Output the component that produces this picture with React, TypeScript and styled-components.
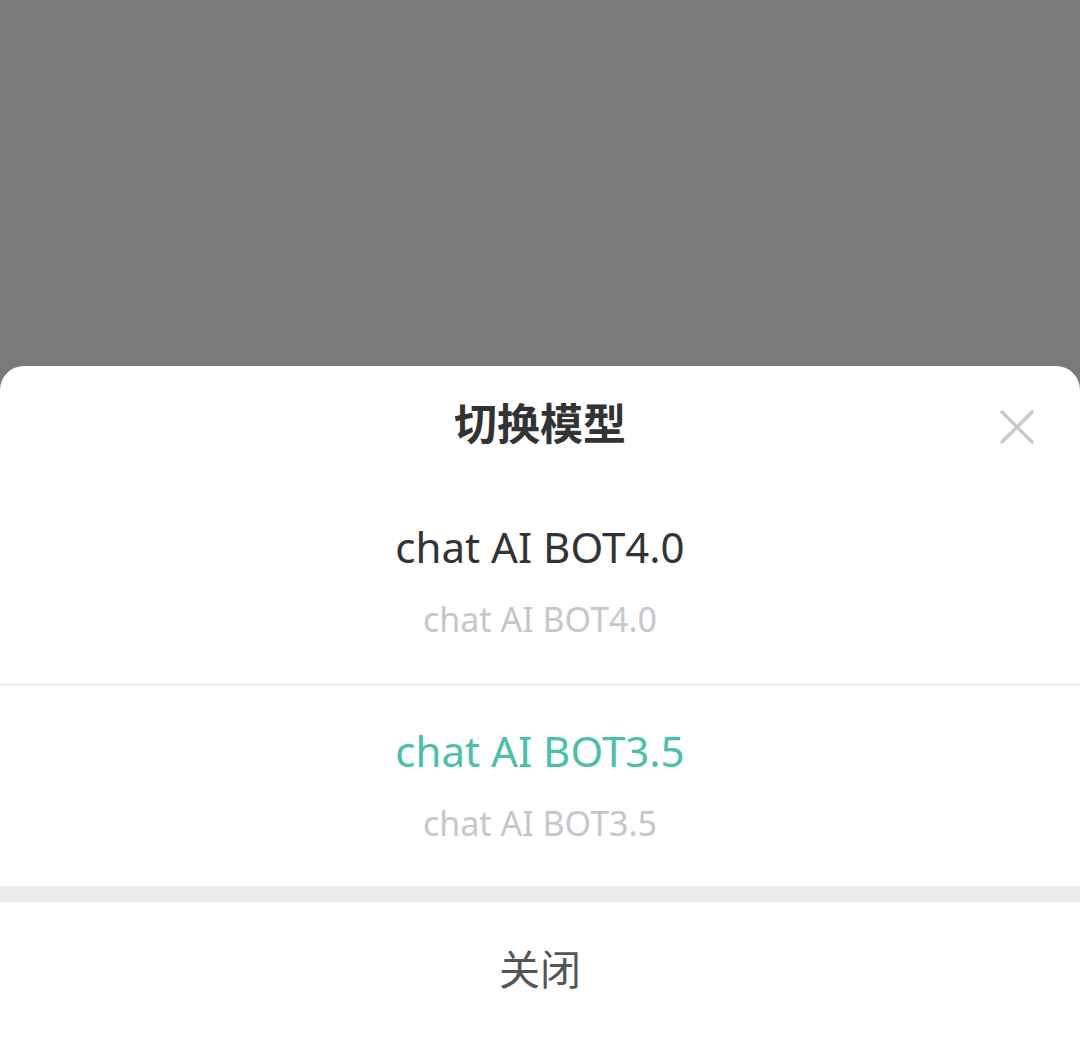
import React from "react";
import styled, { createGlobalStyle } from "styled-components";

const GlobalStyle = createGlobalStyle`
  html, body {
    margin: 0;
    padding: 0;
    background: #7a7a7a;
    font-family: "Noto Sans", "Noto Sans CJK SC", sans-serif;
  }
`;

const Page = styled.div`
  height: 1038px;
  display: flex;
  flex-direction: column;
  justify-content: flex-end;
`;

const Sheet = styled.div`
  background: #fff;
  border-radius: 24px 24px 0 0;
  display: flex;
  flex-direction: column;
`;

const Header = styled.div`
  position: relative;
  height: 114px;
  display: flex;
  align-items: center;
  justify-content: center;
`;

const Title = styled.h2`
  margin: 0 0 5px;
  font-size: 43px;
  font-weight: bold;
  color: #333;
  font-family: "Noto Sans CJK SC", sans-serif;
`;

const CloseIcon = styled.button`
  position: absolute;
  right: 43px;
  top: 41px;
  width: 40px;
  height: 40px;
  padding: 0;
  border: none;
  background: none;
  display: flex;
  align-items: center;
  justify-content: center;
`;

const Option = styled.div<{ $divider?: boolean; $h: number }>`
  height: ${(p) => p.$h}px;
  display: flex;
  flex-direction: column;
  align-items: center;
  justify-content: center;
  gap: 22px;
  padding-bottom: 4px;
  border-top: ${(p) => (p.$divider ? "1px solid #e3e3e3" : "none")};
  box-sizing: border-box;
`;

const Name = styled.div<{ $active?: boolean }>`
  font-size: 42px;
  line-height: 56px;
  color: ${(p) => (p.$active ? "#4cbfa6" : "#333")};
`;

const Sub = styled.div`
  font-size: 34px;
  line-height: 44px;
  color: #c6c6cb;
`;

const Band = styled.div`
  height: 16px;
  background: #ebebeb;
`;

const CloseBar = styled.div`
  height: 136px;
  padding-bottom: 6px;
  box-sizing: border-box;
  display: flex;
  align-items: center;
  justify-content: center;
  font-size: 41px;
  color: #555;
  font-family: "Noto Sans CJK SC", sans-serif;
`;

const models = [
  { name: "chat AI BOT4.0", active: false },
  { name: "chat AI BOT3.5", active: true },
];

const App: React.FC = () => {
  return (
    <>
      <GlobalStyle />
      <Page>
        <Sheet>
          <Header>
            <Title>切换模型</Title>
            <CloseIcon aria-label="close">
              <svg width="34" height="34" viewBox="0 0 34 34">
                <path
                  d="M2 2 L32 32 M32 2 L2 32"
                  stroke="#c8c8c8"
                  strokeWidth="3.2"
                  strokeLinecap="round"
                />
              </svg>
            </CloseIcon>
          </Header>
          {models.map((m, i) => (
            <Option key={m.name} $divider={i > 0} $h={i === 0 ? 204 : 202}>
              <Name $active={m.active}>{m.name}</Name>
              <Sub>{m.name}</Sub>
            </Option>
          ))}
          <Band />
          <CloseBar>关闭</CloseBar>
        </Sheet>
      </Page>
    </>
  );
};

export default App;
